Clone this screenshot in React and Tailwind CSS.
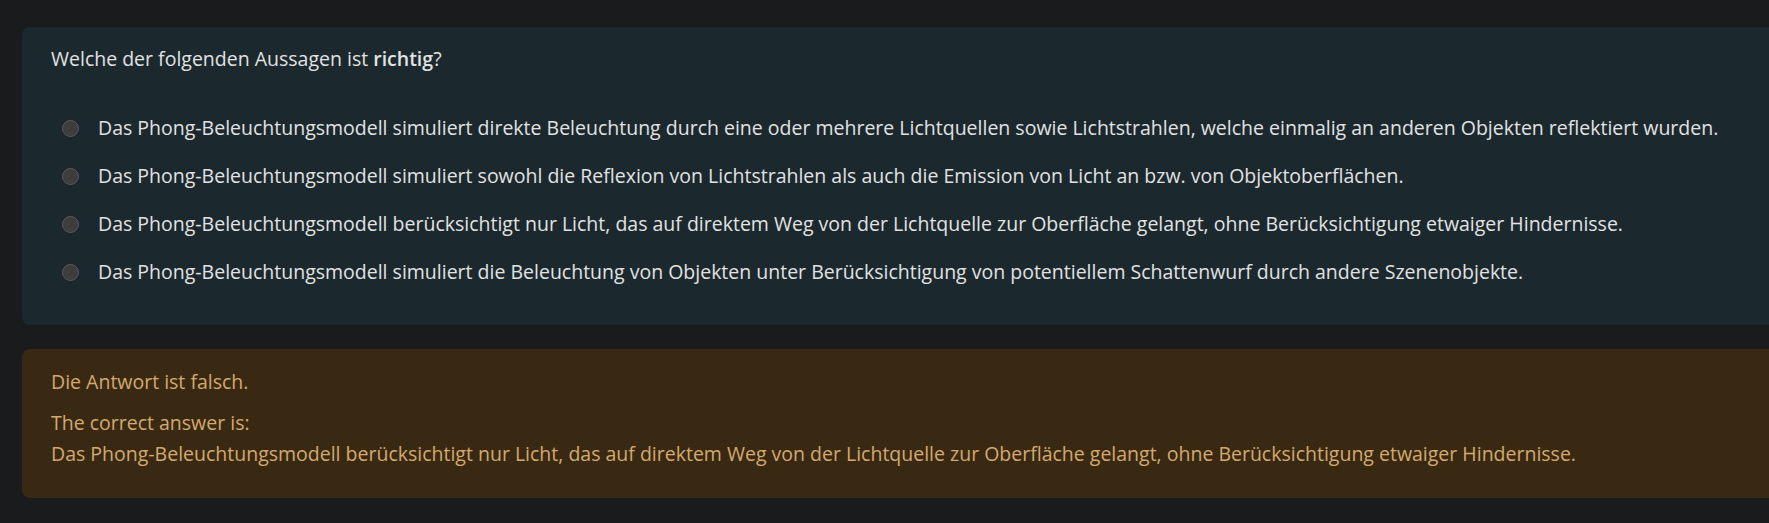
const options = [
  "Das Phong-Beleuchtungsmodell simuliert direkte Beleuchtung durch eine oder mehrere Lichtquellen sowie Lichtstrahlen, welche einmalig an anderen Objekten reflektiert wurden.",
  "Das Phong-Beleuchtungsmodell simuliert sowohl die Reflexion von Lichtstrahlen als auch die Emission von Licht an bzw. von Objektoberflächen.",
  "Das Phong-Beleuchtungsmodell berücksichtigt nur Licht, das auf direktem Weg von der Lichtquelle zur Oberfläche gelangt, ohne Berücksichtigung etwaiger Hindernisse.",
  "Das Phong-Beleuchtungsmodell simuliert die Beleuchtung von Objekten unter Berücksichtigung von potentiellem Schattenwurf durch andere Szenenobjekte.",
];

export default function App() {
  return (
    <div
      className="min-h-[523px] bg-[#191b1c] pt-[27px] pl-[22px]"
      style={{ fontFamily: "'Open Sans', 'Noto Sans', sans-serif" }}
    >
      {/* Question card */}
      <div className="rounded-l-lg bg-[#1b282d] pl-[29px] pt-[19px] pb-[29px] text-[19.5px] text-[#e2e2e2]">
        <p className="leading-[26px]">
          Welche der folgenden Aussagen ist <b className="font-semibold">richtig</b>?
        </p>
        <div className="mt-[32px] flex flex-col">
          {options.map((text) => (
            <label key={text} className="flex h-[48px] items-center pl-[11px]">
              <span className="h-[17px] w-[17px] shrink-0 rounded-full border border-[#5a5a5a] bg-[#3d3d3d]" />
              <span className="ml-[19px] whitespace-nowrap">{text}</span>
            </label>
          ))}
        </div>
      </div>

      {/* Feedback */}
      <div className="mt-[24px] rounded-l-lg bg-[#3a2912] pl-[29px] pt-[17px] pb-[29px] text-[19.5px] leading-[31px] text-[#d3a96f]">
        <p>Die Antwort ist falsch.</p>
        <p className="mt-[10px]">The correct answer is:</p>
        <p>{options[2]}</p>
      </div>
    </div>
  );
}
